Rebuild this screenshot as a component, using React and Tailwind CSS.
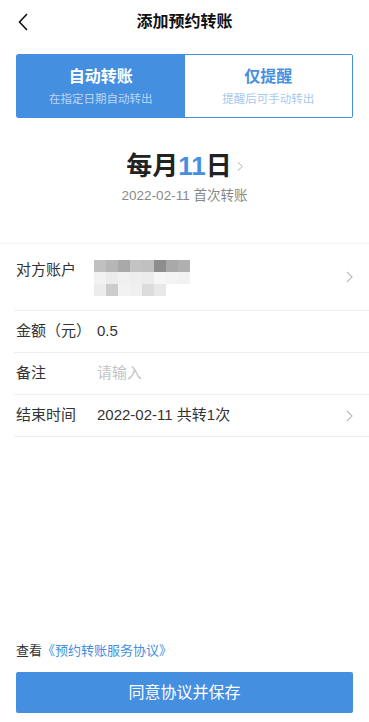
const BLUR = [
  ['#c0c0c0', '#b6b6b6', '#a9a9a9', '#c3c3c3', '#c0c0c0', '#8d8d8d', '#a9a9a9', '#b0b0b0'],
  ['#f2f2f2', '#ececec', '#f0f0f0', '#eeeeee', '#ececec', '#f6f6f6', '#f4f4f4', '#f2f2f2'],
  ['#ececec', '#cccccc', '#f2f2f2', '#f0f0f0', '#dcdcdc', '#e8e8e8'],
]

function Chevron({ className = 'w-[7px] h-[12px]', color = '#bdbdbd' }) {
  return (
    <svg viewBox="0 0 7 12" className={className} fill="none" stroke={color} strokeWidth="1.2">
      <path d="M1 1l5 5-5 5" />
    </svg>
  )
}

function Row({ label, children, arrow, tall }) {
  return (
    <div className={`flex ml-[14px] pl-[2px] pr-[16px] border-b border-[#efefef] ${tall ? 'h-[67px] items-start pt-[15px]' : 'h-[42px] items-center'}`}>
      <span className="w-[81px] shrink-0 text-[15px] text-[#333]">{label}</span>
      <div className="flex-1 text-[15px] text-[#333]">{children}</div>
      {arrow && <div className={tall ? 'self-center -mt-[15px]' : ''}><Chevron /></div>}
    </div>
  )
}

export default function App() {
  return (
    <div className="w-[369px] h-[722px] bg-white flex flex-col" style={{ fontFamily: '"Liberation Sans", "Noto Sans CJK SC", sans-serif' }}>
      <div className="relative h-[44px] flex items-center justify-center">
        <svg viewBox="0 0 10 18" className="absolute left-[18px] top-[13px] w-[10px] h-[18px]" fill="none" stroke="#111" strokeWidth="1.6">
          <path d="M9 1L1.5 9 9 17" />
        </svg>
        <span className="text-[16px] font-bold text-[#111]">添加预约转账</span>
      </div>

      <div className="mx-[16px] mt-[10px] h-[64px] flex border border-[#458fe1] rounded-[2px] overflow-hidden">
        <div className="flex-1 bg-[#458fe1] flex flex-col items-center justify-center">
          <span className="text-[16px] font-bold text-white leading-[22px]">自动转账</span>
          <span className="text-[11.5px] text-[#bcd6f5] leading-[16px] mt-[3px]">在指定日期自动转出</span>
        </div>
        <div className="flex-1 bg-white flex flex-col items-center justify-center">
          <span className="text-[16px] font-bold text-[#458fe1] leading-[22px]">仅提醒</span>
          <span className="text-[11.5px] text-[#a9c8ee] leading-[16px] mt-[3px]">提醒后可手动转出</span>
        </div>
      </div>

      <div className="flex flex-col items-center mt-[30px] h-[95px]">
        <div className="flex items-center">
          <span className="text-[26px] font-bold text-[#222] leading-[36px]">
            每月<span className="text-[#458fe1]">11</span>日
          </span>
          <Chevron className="w-[6px] h-[11px] ml-[5px]" color="#c4c4c4" />
        </div>
        <span className="text-[13.5px] text-[#888] mt-[2px]">2022-02-11 首次转账</span>
      </div>

      <div className="border-t border-[#f3f3f3]">
        <Row label="对方账户" arrow tall>
          <div className="flex flex-col mt-[1px] -ml-[3px]">
            {BLUR.map((r, i) => (
              <div key={i} className="flex">
                {r.map((c, j) => (
                  <div key={j} className="w-[12px] h-[12px]" style={{ backgroundColor: c }} />
                ))}
              </div>
            ))}
          </div>
        </Row>
        <Row label="金额（元）">0.5</Row>
        <Row label="备注"><span className="text-[#c4c4c4]">请输入</span></Row>
        <Row label="结束时间" arrow>2022-02-11 共转1次</Row>
      </div>

      <div className="flex-1" />

      <div className="px-[16px] text-[13px] text-[#333]">
        查看<span className="text-[#458fe1]">《预约转账服务协议》</span>
      </div>
      <button className="mx-[16px] mt-[12px] mb-[9px] h-[41px] bg-[#458fe1] rounded-[2px] text-white text-[16px]">
        同意协议并保存
      </button>
    </div>
  )
}
